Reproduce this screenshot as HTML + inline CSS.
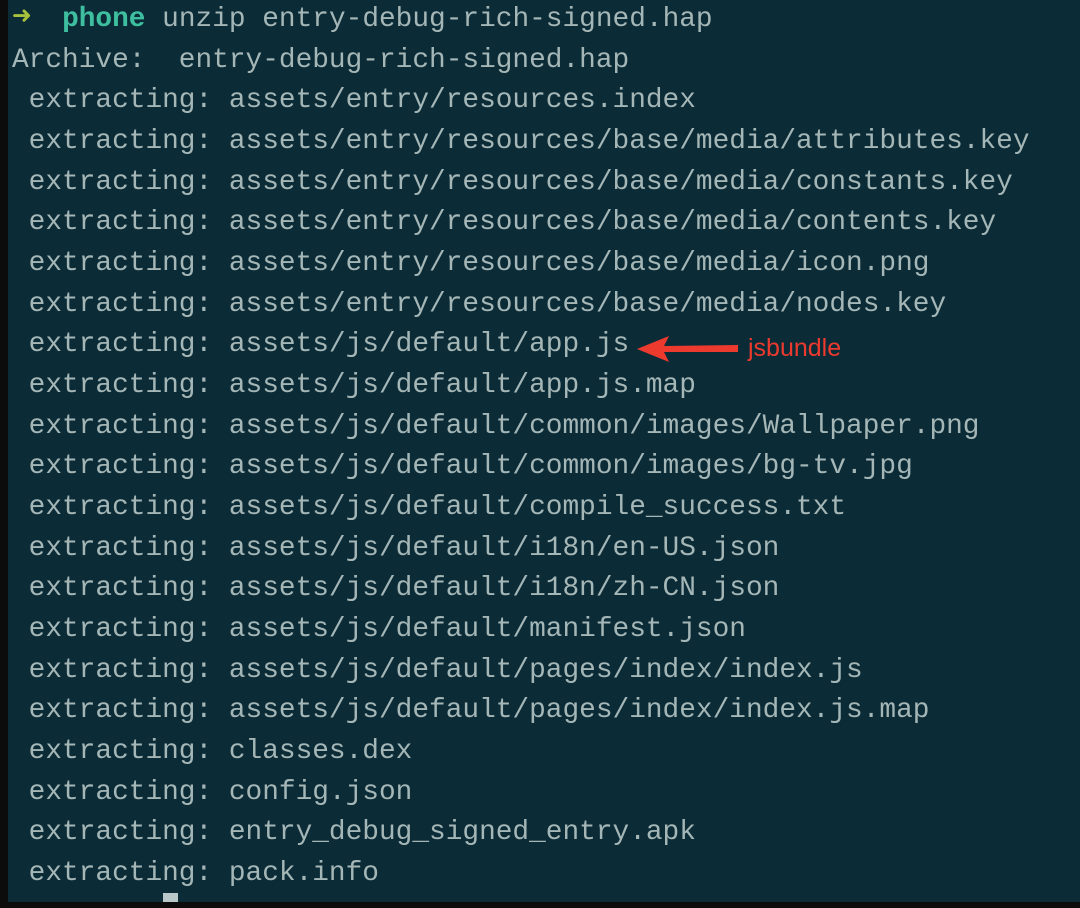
<!DOCTYPE html>
<html><head><meta charset="utf-8"><style>
html,body{margin:0;padding:0;background:#0c0c0c;}
.t{position:absolute;left:8px;top:0;width:1072px;height:902px;background:#0b2b37;overflow:hidden;}
pre{position:absolute;left:4px;top:-3px;margin:0;font-family:"Liberation Mono",monospace;font-size:27.8px;line-height:40.67px;color:#a4b6b6;}
.a{color:#a6c03c;font-weight:bold;font-family:"DejaVu Sans Mono",monospace;display:inline-block;width:16.7px;transform:scale(1.15);transform-origin:0 60%;}
.p{color:#3ec0a0;font-weight:bold}
.cur{position:absolute;left:155px;top:893px;width:15px;height:9px;background:#b9c8c8;}
.lbl{position:absolute;left:740px;top:334px;font-family:"Liberation Sans",sans-serif;font-size:25px;color:#ec3a2e;}
</style></head><body>
<div class="t">
<pre><span class="a">➜</span>  <span class="p">phone</span> unzip entry-debug-rich-signed.hap
Archive:  entry-debug-rich-signed.hap
 extracting: assets/entry/resources.index
 extracting: assets/entry/resources/base/media/attributes.key
 extracting: assets/entry/resources/base/media/constants.key
 extracting: assets/entry/resources/base/media/contents.key
 extracting: assets/entry/resources/base/media/icon.png
 extracting: assets/entry/resources/base/media/nodes.key
 extracting: assets/js/default/app.js
 extracting: assets/js/default/app.js.map
 extracting: assets/js/default/common/images/Wallpaper.png
 extracting: assets/js/default/common/images/bg-tv.jpg
 extracting: assets/js/default/compile_success.txt
 extracting: assets/js/default/i18n/en-US.json
 extracting: assets/js/default/i18n/zh-CN.json
 extracting: assets/js/default/manifest.json
 extracting: assets/js/default/pages/index/index.js
 extracting: assets/js/default/pages/index/index.js.map
 extracting: classes.dex
 extracting: config.json
 extracting: entry_debug_signed_entry.apk
 extracting: pack.info</pre>
<svg style="position:absolute;left:620px;top:334px" width="120" height="30"><polygon points="9,15 41,2 36,12 110,11 110,18 36,18 41,28" fill="#ec3a2e"/></svg>
<div class="lbl">jsbundle</div>
<div class="cur"></div>
</div>
</body></html>
